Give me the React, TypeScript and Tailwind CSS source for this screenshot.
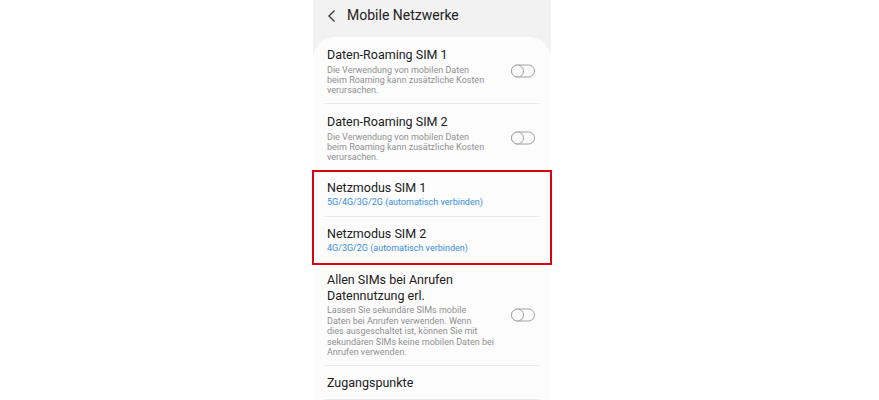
import React from 'react';

const Toggle: React.FC = () => (
  <svg width="24" height="14" viewBox="0 0 24 14" className="shrink-0">
    <rect x="0.5" y="1" width="23" height="12" rx="6" fill="none" stroke="#a0a0a0" strokeWidth="1" />
    <circle cx="6.5" cy="7" r="6" fill="#fcfcfc" stroke="#a0a0a0" strokeWidth="1" />
  </svg>
);

const Lines: React.FC<{ lines: string[] }> = ({ lines }) => (
  <>
    {lines.map((line) => (
      <span key={line} className="block whitespace-nowrap">
        {line}
      </span>
    ))}
  </>
);

const ROAMING_DESC = ['Die Verwendung von mobilen Daten', 'beim Roaming kann zusätzliche Kosten', 'verursachen.'];

type SwitchRowProps = { title: string; desc: string[]; className?: string };

const SwitchRow: React.FC<SwitchRowProps> = ({ title, desc, className = '' }) => (
  <div className={`flex items-center justify-between pl-[3px] pr-[5px] border-b border-[#ebebeb] ${className}`}>
    <div className="w-[176px]">
      <p className="text-[12.5px] leading-[16px] text-[#202020]">{title}</p>
      <p className="mt-[2px] text-[9px] leading-[10px] text-[#909090]">
        <Lines lines={desc} />
      </p>
    </div>
    <Toggle />
  </div>
);

type ModeRowProps = { title: string; value: string; className?: string };

const ModeRow: React.FC<ModeRowProps> = ({ title, value, className = '' }) => (
  <div className={`pl-[3px] pr-[5px] ${className}`}>
    <p className="text-[12.5px] leading-[16px] text-[#202020]">{title}</p>
    <p className="mt-[1px] text-[9px] leading-[11px] text-[#3a8ee0]">{value}</p>
  </div>
);

const App: React.FC = () => {
  return (
    <div className="w-[879px] h-[400px] bg-white overflow-hidden pl-[313px] font-['Roboto',sans-serif]">
      <div className="w-[238px] h-[400px] bg-[#f2f2f2]">
        <div className="h-[37px] flex items-center pl-[14px] pb-[6px]">
          <svg width="10" height="14" viewBox="0 0 10 14" className="mr-[10px]">
            <path d="M7.5 1.5 L2 7 L7.5 12.5" fill="none" stroke="#333" strokeWidth="1.3" />
          </svg>
          <span className="text-[14px] text-[#222]">Mobile Netzwerke</span>
        </div>

        <div className="bg-[#fcfcfc] rounded-t-[22px] h-[363px] px-[11px]">
          <SwitchRow className="pt-[10px] pb-[8px]" title="Daten-Roaming SIM 1" desc={ROAMING_DESC} />
          <SwitchRow className="pt-[10px] pb-[8px]" title="Daten-Roaming SIM 2" desc={ROAMING_DESC} />

          <div className="relative">
            <ModeRow
              className="pt-[9px] pb-[8px] border-b border-[#ebebeb]"
              title="Netzmodus SIM 1"
              value="5G/4G/3G/2G (automatisch verbinden)"
            />
            <ModeRow
              className="pt-[9px] pb-[9px] border-b border-[#ebebeb]"
              title="Netzmodus SIM 2"
              value="4G/3G/2G (automatisch verbinden)"
            />
            <div className="absolute -left-[12px] -right-[12px] -top-[1px] -bottom-[1px] border-2 border-[#d9000f] pointer-events-none" />
          </div>

          <div className="flex items-center justify-between pl-[3px] pr-[5px] pt-[8px] pb-[7px] border-b border-[#ebebeb]">
            <div className="w-[176px]">
              <p className="text-[12.5px] leading-[16px] text-[#202020]">
                <Lines lines={['Allen SIMs bei Anrufen', 'Datennutzung erl.']} />
              </p>
              <p className="mt-[1px] text-[9px] leading-[10.5px] text-[#909090]">
                <Lines
                  lines={[
                    'Lassen Sie sekundäre SIMs mobile',
                    'Daten bei Anrufen verwenden. Wenn',
                    'dies ausgeschaltet ist, können Sie mit',
                    'sekundären SIMs keine mobilen Daten bei',
                    'Anrufen verwenden.',
                  ]}
                />
              </p>
            </div>
            <Toggle />
          </div>

          <div className="pl-[3px] pt-[9px] pb-[8px] border-b border-[#ebebeb]">
            <p className="text-[12.5px] leading-[16px] text-[#202020]">Zugangspunkte</p>
          </div>
        </div>
      </div>
    </div>
  );
};

export default App;
